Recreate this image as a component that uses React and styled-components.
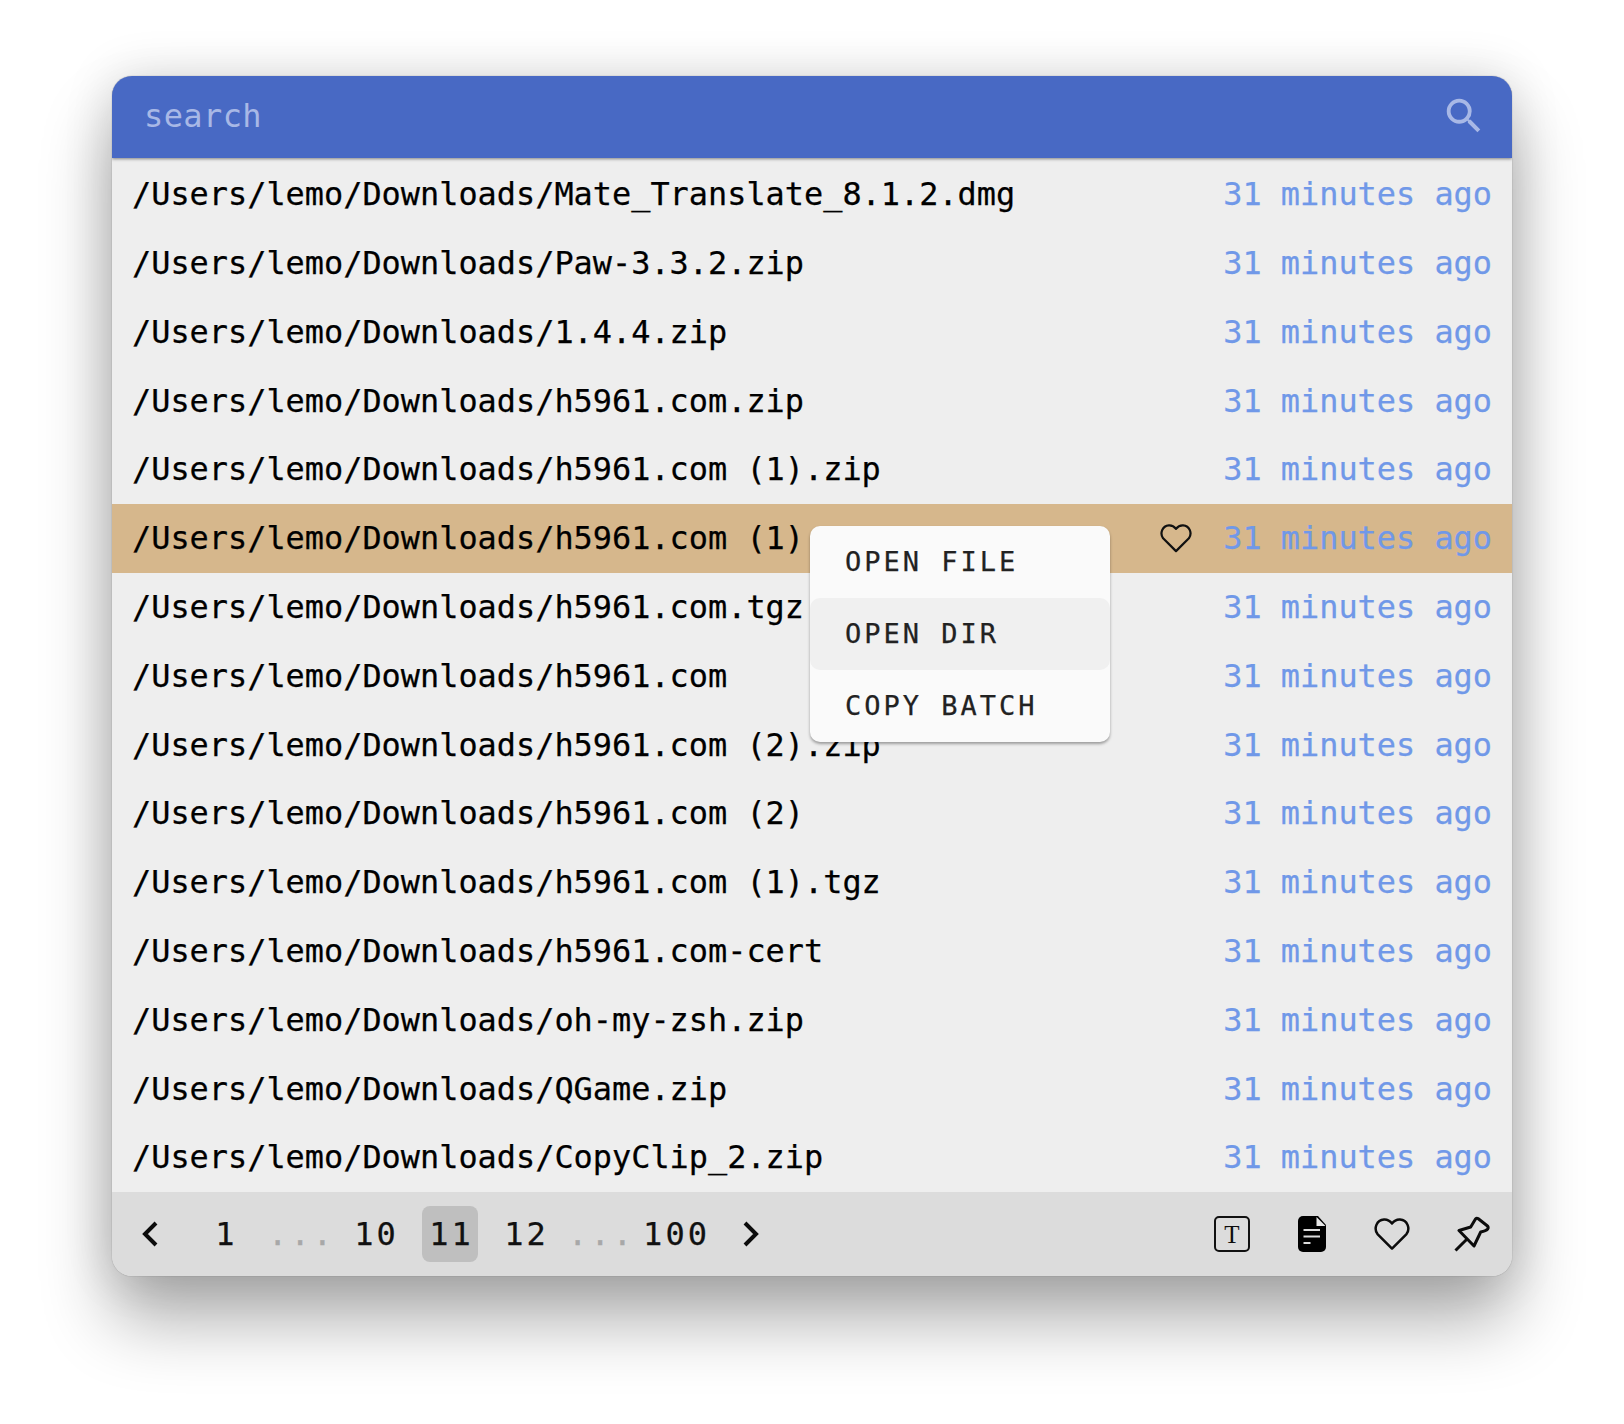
import React from "react";
import styled, { createGlobalStyle } from "styled-components";
import { MdSearch } from "react-icons/md";

const MONO = `"DejaVu Sans Mono", "Liberation Mono", monospace`;

const GlobalStyle = createGlobalStyle`
  html, body {
    margin: 0;
    background: #fff;
    font-family: ${MONO};
  }
`;

const Page = styled.div`
  width: 1624px;
  height: 1424px;
  padding: 76px 112px 0;
  box-sizing: border-box;
`;

const Window = styled.div`
  width: 1400px;
  height: 1200px;
  display: flex;
  flex-direction: column;
  border-radius: 20px;
  overflow: hidden;
  background: #eee;
  box-shadow: 0 0 1px rgba(0, 0, 0, 0.5), 0 44px 70px rgba(0, 0, 0, 0.32),
    0 0 50px rgba(0, 0, 0, 0.14);
`;

const Header = styled.div`
  height: 82px;
  flex: none;
  display: flex;
  align-items: center;
  justify-content: space-between;
  padding: 0 25px 2px 32px;
  box-sizing: border-box;
  background: #4869c4;
  box-shadow: 0 1px 3px rgba(0, 0, 0, 0.45);
  position: relative;
  z-index: 2;
  color: #a8b8e6;
`;

const SearchText = styled.span`
  font-size: 32px;
  letter-spacing: 0.4px;
`;

const List = styled.div`
  flex: 1;
  min-height: 0;
  padding-top: 1.9px;
`;

const Row = styled.div`
  position: relative;
  height: 68.8px;
  padding: 0 20px;
  display: flex;
  align-items: center;
  font-size: 31.9px;
  color: #000;
  -webkit-text-stroke: 0.25px currentColor;
  background: ${(props) => (props.$active ? "#d6b78c" : "transparent")};
`;

const FilePath = styled.span`
  flex: 1;
  white-space: pre;
`;

const RowHeart = styled.div`
  display: flex;
  margin-right: 31px;
  color: #111;
`;

const TimeAgo = styled.span`
  color: #7098e8;
  white-space: pre;
`;

const Menu = styled.div`
  position: absolute;
  z-index: 3;
  left: 698px;
  top: 22px;
  width: 300px;
  border-radius: 10px;
  background: #fafafa;
  overflow: hidden;
  box-shadow: 0 2px 3px rgba(0, 0, 0, 0.35);
`;

const MenuItem = styled.div`
  height: 72px;
  display: flex;
  align-items: center;
  padding-left: 35px;
  font-size: 27px;
  letter-spacing: 3px;
  color: #222;
  -webkit-text-stroke: 0.25px currentColor;
  border-radius: 10px;
  background: ${(props) => (props.$hover ? "#f0f0f0" : "transparent")};
`;

const Footer = styled.div`
  height: 84px;
  flex: none;
  display: flex;
  align-items: center;
  justify-content: space-between;
  padding: 0 20px 0 10px;
  background: #dcdcdc;
`;

const Pager = styled.div`
  display: flex;
  align-items: center;
  gap: 19px;
`;

const PageItem = styled.div`
  width: 56px;
  height: 56px;
  box-sizing: border-box;
  padding-left: ${(props) => (props.$icon ? "0" : "3px")};
  display: flex;
  align-items: center;
  justify-content: center;
  border-radius: 8px;
  font-size: 32px;
  letter-spacing: 3px;
  color: ${(props) => (props.$dim ? "#a8a8a8" : "#111")};
  -webkit-text-stroke: 0.25px currentColor;
  background: ${(props) => (props.$current ? "#bfbfbf" : "transparent")};
`;

const Tools = styled.div`
  display: flex;
  align-items: center;
  gap: 40px;
  color: #0c0c0c;
`;

const ToolSlot = styled.div`
  width: 40px;
  height: 40px;
  display: flex;
  align-items: center;
  justify-content: center;
`;

const TextTool = styled.div`
  width: 36px;
  height: 36px;
  box-sizing: border-box;
  display: flex;
  align-items: center;
  justify-content: center;
  border: 2px solid #111;
  border-radius: 5px;
  font-family: "Liberation Serif", serif;
  font-size: 25px;
  line-height: 1;
`;

const Chevron = ({ flip }) => (
  <svg width="20" height="32" viewBox="0 0 20 32" fill="none">
    <path
      d={flip ? "M5 5 L16 16 L5 27" : "M16 5 L5 16 L16 27"}
      stroke="#0c0c0c"
      strokeWidth="4"
    />
  </svg>
);

const HeartIcon = ({ size }) => (
  <svg width={size} height={size * 0.89} viewBox="0 0 36 32" fill="none">
    <path
      d="M18 30.5 L3.5 16 C-0.5 10.5 2.5 2 10 1.5 C13.5 1.3 16.5 3.5 18 5.5 C19.5 3.5 22.5 1.3 26 1.5 C33.5 2 36.5 10.5 32.5 16 Z"
      stroke="currentColor"
      strokeWidth="2.5"
      strokeLinejoin="round"
    />
  </svg>
);

const FileIcon = () => (
  <svg width="28" height="36" viewBox="0 0 28 36">
    <path d="M5 0 H20 L28 9 V31 a5 5 0 0 1-5 5 H5 a5 5 0 0 1-5-5 V5 a5 5 0 0 1 5-5z" fill="#000" />
    <path d="M18.5 1 L27.5 10 H18.5z" fill="#e8e8e8" />
    <path d="M5.5 14 H22 M5.5 20.5 H22 M5.5 27 H12.5" stroke="#dcdcdc" strokeWidth="2" />
  </svg>
);

const PinIcon = () => (
  <svg width="36" height="36" viewBox="0 0 36 36" fill="none">
    <path
      d="M5 14.5 L16.7 11 L21.5 3 Q22.6 1.8 24 2.5 L33.5 10 Q34.8 11.8 33.5 13.2 Q32 14.8 26.7 16 L20 30 Z"
      stroke="currentColor"
      strokeWidth="3"
      strokeLinejoin="round"
    />
    <path d="M1.5 34.5 L13.3 22.7" stroke="currentColor" strokeWidth="3" />
  </svg>
);

const FILES = [
  "/Users/lemo/Downloads/Mate_Translate_8.1.2.dmg",
  "/Users/lemo/Downloads/Paw-3.3.2.zip",
  "/Users/lemo/Downloads/1.4.4.zip",
  "/Users/lemo/Downloads/h5961.com.zip",
  "/Users/lemo/Downloads/h5961.com (1).zip",
  "/Users/lemo/Downloads/h5961.com (1)",
  "/Users/lemo/Downloads/h5961.com.tgz",
  "/Users/lemo/Downloads/h5961.com",
  "/Users/lemo/Downloads/h5961.com (2).zip",
  "/Users/lemo/Downloads/h5961.com (2)",
  "/Users/lemo/Downloads/h5961.com (1).tgz",
  "/Users/lemo/Downloads/h5961.com-cert",
  "/Users/lemo/Downloads/oh-my-zsh.zip",
  "/Users/lemo/Downloads/QGame.zip",
  "/Users/lemo/Downloads/CopyClip_2.zip",
];

const ACTIVE_ROW = 5;

export default function App() {
  return (
    <Page>
      <GlobalStyle />
      <Window>
        <Header>
          <SearchText>search</SearchText>
          <MdSearch size={46} />
        </Header>
        <List>
          {FILES.map((file, i) => (
            <Row key={file} $active={i === ACTIVE_ROW}>
              <FilePath>{file}</FilePath>
              {i === ACTIVE_ROW && (
                <RowHeart>
                  <HeartIcon size={32} />
                </RowHeart>
              )}
              <TimeAgo>31 minutes ago</TimeAgo>
              {i === ACTIVE_ROW && (
                <Menu>
                  <MenuItem>OPEN FILE</MenuItem>
                  <MenuItem $hover>OPEN DIR</MenuItem>
                  <MenuItem>COPY BATCH</MenuItem>
                </Menu>
              )}
            </Row>
          ))}
        </List>
        <Footer>
          <Pager>
            <PageItem $icon><Chevron /></PageItem>
            <PageItem>1</PageItem>
            <PageItem $dim>...</PageItem>
            <PageItem>10</PageItem>
            <PageItem $current>11</PageItem>
            <PageItem>12</PageItem>
            <PageItem $dim>...</PageItem>
            <PageItem>100</PageItem>
            <PageItem $icon><Chevron flip /></PageItem>
          </Pager>
          <Tools>
            <ToolSlot><TextTool>T</TextTool></ToolSlot>
            <ToolSlot><FileIcon /></ToolSlot>
            <ToolSlot><HeartIcon size={36} /></ToolSlot>
            <ToolSlot><PinIcon /></ToolSlot>
          </Tools>
        </Footer>
      </Window>
    </Page>
  );
}
